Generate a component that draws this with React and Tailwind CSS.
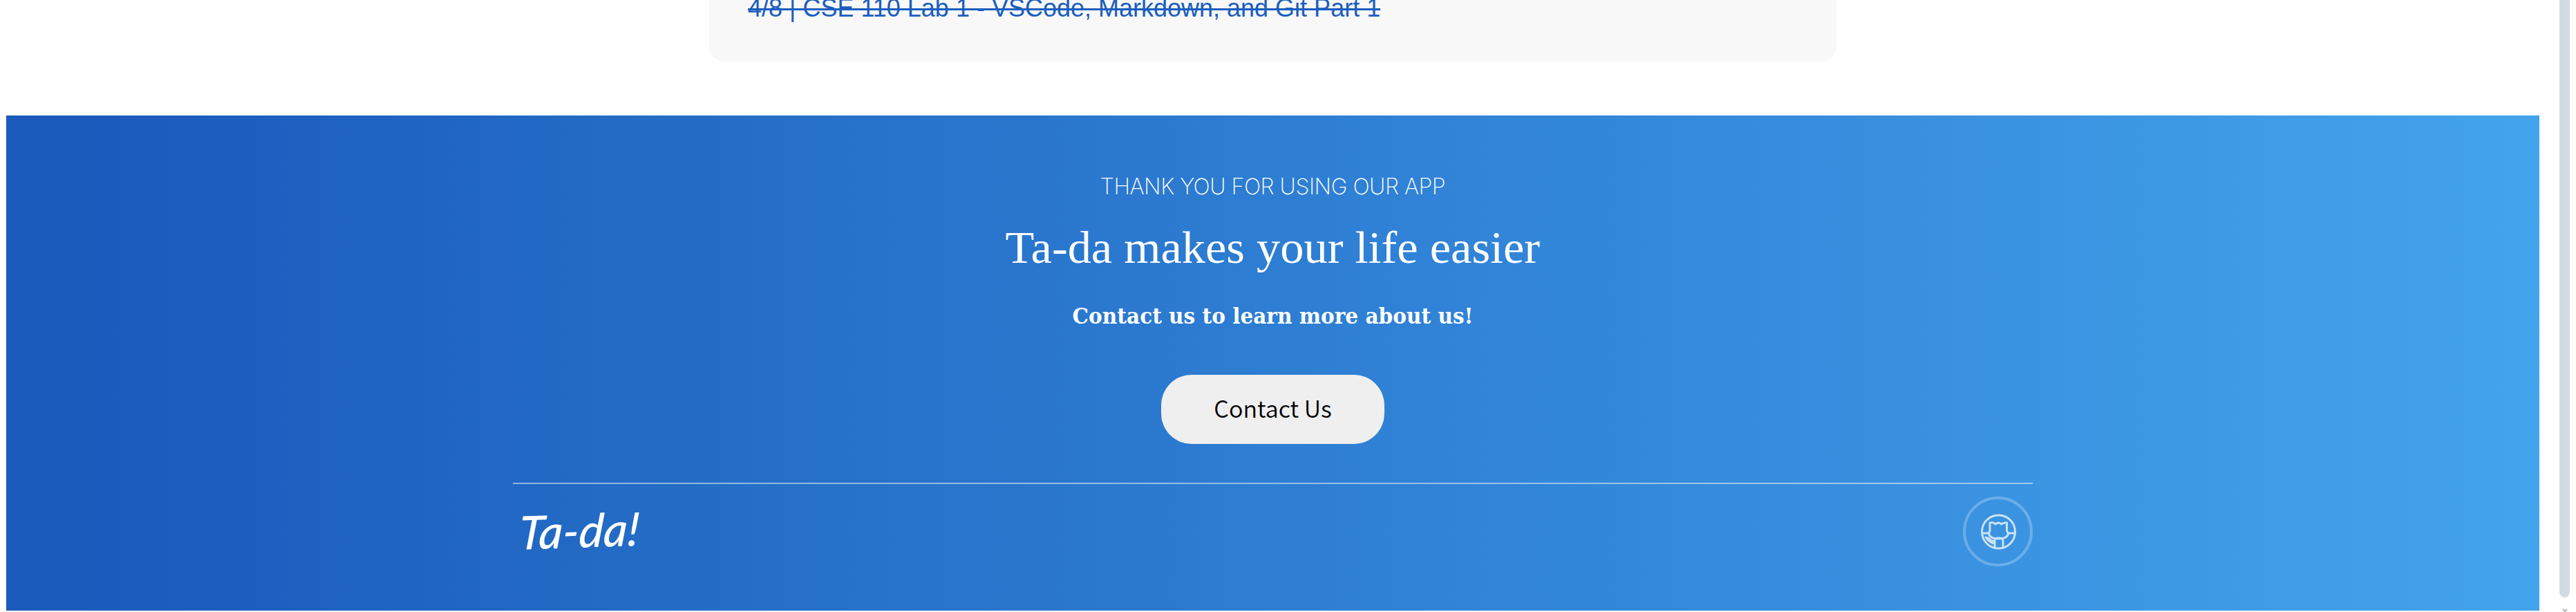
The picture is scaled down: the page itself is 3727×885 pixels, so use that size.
import React from "react";

function GithubMark() {
  return (
    <svg className="h-[52px] w-[52px]" viewBox="0 0 52 52" fill="none" stroke="#c9e2f8" strokeWidth="3" strokeLinejoin="round">
      <circle cx="26.5" cy="26" r="24" />
      <path d="M14 13c3-1 6 0 8 2 1-1 3-2 4.500-2s3 1 4 2c3-2 5-3 8-2v11l2 5c-1 5-6 7-14 7s-13-2-14-7l1.500-5z" />
      <path d="M2.500 28H12M41 28h9M21 49V39c0-3 1-4 5.500-4s6.500 1 6.500 4v10M21 39c-5 1-7-1-8-3l-5-2c3 3 4 8 13 9" />
    </svg>
  );
}

export default function App() {
  return (
    <div className="relative flex h-[885px] w-full flex-col overflow-hidden bg-white">
      <section className="ml-[1026px] h-[89px] w-[1631px] overflow-hidden rounded-b-[22px] bg-[#f8f8f8] pl-14">
        <p className="-mt-[8px] whitespace-nowrap font-['Liberation_Sans',sans-serif] text-[36px] leading-[40px] text-[#1b5ebe] line-through decoration-[3px]">4/8 | CSE 110 Lab 1 - VSCode, Markdown, and Git Part 1</p>
      </section>
      <footer className="ml-[9px] mt-[78px] flex h-[716px] w-[3665px] flex-col items-center bg-[linear-gradient(90deg,#1a5aba_0%,#1c5dbf_7%,#236bc5_24%,#2a77ce_42%,#2f81d5_54%,#3990df_75%,#43a4ec_100%)] text-white">
        <p className="mt-[82px] h-[42px] whitespace-nowrap font-['Inter',sans-serif] text-[32px] font-extralight leading-[42px] tracking-[-0.45px]">THANK YOU FOR USING OUR APP</p>
        <h2 className="mt-[27px] h-[80px] scale-x-[1.036] whitespace-nowrap font-['Liberation_Serif',serif] text-[66px] leading-[80px]">Ta-da makes your life easier</h2>
        <p className="mt-[37px] h-[44px] scale-x-[1.06] whitespace-nowrap font-['DejaVu_Serif_Condensed','DejaVu_Serif',serif] text-[31px] font-bold leading-[44px]">Contact us to learn more about us!</p>
        <button className="mt-[63px] flex h-[100px] w-[323px] items-center justify-center rounded-[44px] bg-[#efefef] pb-[5px] font-['Noto_Sans_CJK_SC',sans-serif] text-[34px] font-[350] text-black">Contact Us</button>
        <div className="mt-[56px] flex w-[2199px] justify-between border-t-2 border-white/50">
          <span className="ml-[9px] mt-[26px] h-[80px] origin-center -rotate-2 -skew-x-6 whitespace-nowrap font-['Lato',sans-serif] text-[67px] font-medium italic leading-[80px]">Ta-da!</span>
          <a className="mt-[18px] flex h-[101px] w-[101px] items-center justify-center rounded-full border-4 border-white/25"><GithubMark /></a>
        </div>
      </footer>
      <div className="absolute -top-4 right-[9px] h-[880px] w-[15px] rounded-full bg-[#d1dbe4]" />
      <svg className="absolute bottom-0 right-[12px] h-[5px] w-[8px]" viewBox="0 0 8 5" fill="none" stroke="#b5b5b5" strokeWidth="2"><path d="M1 1l3 3 3-3" /></svg>
    </div>
  );
}
